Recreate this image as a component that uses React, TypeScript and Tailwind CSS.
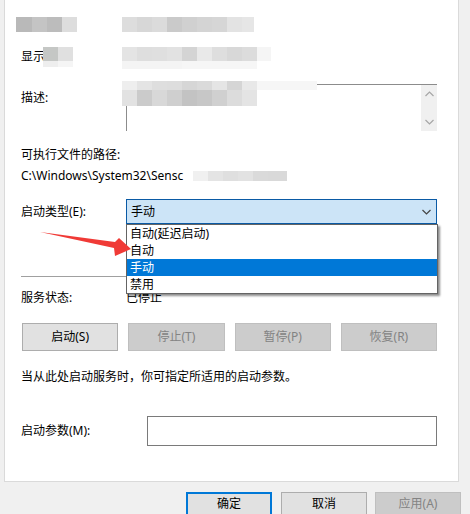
import React from "react";

const FONT = "font-['Noto_Sans','Noto_Sans_CJK_SC',sans-serif]";

// Pixelated censor strip: each cell is [width, colour]
function Mosaic({ rows, className }: { rows: { h: number; cells: [number, string][] }[]; className?: string }) {
  return (
    <div className={"flex flex-col " + (className ?? "")}>
      {rows.map((r, i) => (
        <div key={i} className="flex" style={{ height: r.h }}>
          {r.cells.map(([w, c], j) => (
            <div key={j} style={{ width: w, background: c }} />
          ))}
        </div>
      ))}
    </div>
  );
}

function Chevron({ up, className }: { up?: boolean; className?: string }) {
  return (
    <svg width="9" height="6" viewBox="0 0 9 6" className={className}>
      <path
        d={up ? "M0.5 5 L4.5 1 L8.5 5" : "M0.5 1 L4.5 5 L8.5 1"}
        fill="none"
        stroke="currentColor"
        strokeWidth="1.2"
      />
    </svg>
  );
}

function SvcButton({ label, enabled }: { label: string; enabled?: boolean }) {
  return (
    <div
      className={
        "h-[28px] flex items-center justify-center border text-[12px] " +
        (enabled
          ? "bg-[#e1e1e1] border-[#adadad] text-black"
          : "bg-[#cccccc] border-[#bfbfbf] text-[#838383]")
      }
    >
      {label}
    </div>
  );
}

export default function App() {
  return (
    <div className={"relative w-[470px] h-[514px] overflow-hidden bg-[#f0f0f0] text-black " + FONT}>
      {/* property page */}
      <div className="ml-[4px] w-[455px] h-[482px] bg-white border-l border-r border-b border-[#dadada] pl-[16px] pr-[21px] flex flex-col">
        {/* name row (censored) */}
        <div className="relative mt-[17px] h-[15px]">
          <Mosaic
            className="absolute left-[-5px] top-0"
            rows={[
              {
                h: 15,
                cells: [
                  [16, "#b9b9b9"],
                  [15, "#c4c4c4"],
                  [15, "#bcbcbc"],
                  [15, "#dddddd"],
                ],
              },
            ]}
          />
          <Mosaic
            className="absolute left-[101px] top-0"
            rows={[
              {
                h: 15,
                cells: [
                  [15, "#dddddd"],
                  [15, "#d7d7d7"],
                  [15, "#dbdbdb"],
                  [15, "#cacaca"],
                  [15, "#d0d0d0"],
                  [15, "#d4d4d4"],
                  [15, "#d6d6d6"],
                  [15, "#e3e3e3"],
                  [12, "#e6e6e6"],
                ],
              },
            ]}
          />
        </div>

        {/* display name row */}
        <div className="relative mt-[15px] h-[20px]">
          <span className="absolute left-0 top-[2px] text-[12px] leading-[16px]">显示</span>
          <Mosaic
            className="absolute left-[22px] top-0"
            rows={[
              { h: 14, cells: [[15, "#c5c7c5"], [15, "#e0e0e0"]] },
              { h: 6, cells: [[15, "#eeeeee"], [15, "#f5f5f5"]] },
            ]}
          />
          <Mosaic
            className="absolute left-[101px] top-0"
            rows={[
              {
                h: 14,
                cells: [
                  [15, "#e4e4e4"],
                  [15, "#dedede"],
                  [15, "#dfdfdf"],
                  [15, "#e2e2e2"],
                  [15, "#d4d4d4"],
                  [15, "#e9e9e9"],
                  [15, "#dedede"],
                  [15, "#d8d8d8"],
                  [15, "#dcdcdc"],
                  [14, "#f5f5f5"],
                ],
              },
              {
                h: 8,
                cells: [
                  [60, "#f4f4f4"],
                  [75, "#f6f6f6"],
                ],
              },
            ]}
          />
        </div>

        {/* description row */}
        <div className="relative mt-[17px] h-[47px]">
          <span className="absolute left-0 top-[6px] text-[12px] leading-[16px]">描述:</span>
          <div className="absolute left-[105px] right-0 top-0 bottom-0 border-t border-l border-[#8c8c8c] flex justify-end">
            <div className="w-[16px] h-full bg-[#f0f0f0] flex flex-col items-center justify-between py-[6px] text-[#a6a6a6]">
              <Chevron up />
              <Chevron />
            </div>
          </div>
          <Mosaic
            className="absolute left-[101px] top-[-3px]"
            rows={[
              {
                h: 9,
                cells: [
                  [15, "#eeeeee"],
                  [15, "#e4e4e4"],
                  [15, "#dedede"],
                  [15, "#dddddd"],
                  [15, "#d6d6d6"],
                  [15, "#dadada"],
                  [15, "#e5e5e5"],
                  [15, "#d5d5d5"],
                  [15, "#e8e8e8"],
                  [60, "#f6f6f6"],
                ],
              },
              {
                h: 16,
                cells: [
                  [15, "#e2e2e2"],
                  [15, "#cbcbcb"],
                  [15, "#d8d8d8"],
                  [15, "#cfcfcf"],
                  [15, "#c3c3c3"],
                  [15, "#c7c7c7"],
                  [15, "#d0d0d0"],
                  [15, "#dcdcdc"],
                  [15, "#e4e4e4"],
                ],
              },
            ]}
          />
        </div>

        {/* executable path */}
        <div className="mt-[16px] h-[16px] text-[12px] leading-[16px]">可执行文件的路径:</div>
        <div className="relative mt-[5px] h-[16px] text-[12px] leading-[16px]">
          <span>C:\Windows\System32\Sensc</span>
          <Mosaic
            className="absolute left-[172px] top-[3px]"
            rows={[
              {
                h: 10,
                cells: [
                  [15, "#f0f0f0"],
                  [15, "#e4e4e4"],
                  [15, "#dfdfdf"],
                  [15, "#e2e2e2"],
                  [15, "#dadada"],
                  [19, "#d9d9d9"],
                ],
              },
            ]}
          />
        </div>

        {/* startup type */}
        <div className="mt-[15px] h-[25px] flex items-center">
          <span className="w-[105px] text-[12px] leading-[16px]">启动类型(E):</span>
          <div className="flex-1 h-[25px] border border-[#0a5aa5] bg-[#cce4f7] flex items-center justify-between pl-[4px] pr-[5px]">
            <span className="text-[12px] leading-[16px]">手动</span>
            <Chevron className="text-[#444444]" />
          </div>
        </div>

        <div className="mt-[52px] h-px w-[110px] bg-[#a0a0a0]" />

        {/* service status */}
        <div className="mt-[13px] h-[16px] flex items-center text-[12px] leading-[16px]">
          <span className="w-[105px]">服务状态:</span>
          <span>已停止</span>
        </div>

        <div className="mt-[17px] ml-[1px] grid grid-cols-4 gap-[10px]">
          <SvcButton label="启动(S)" enabled />
          <SvcButton label="停止(T)" />
          <SvcButton label="暂停(P)" />
          <SvcButton label="恢复(R)" />
        </div>

        <div className="mt-[18px] h-[16px] text-[12px] leading-[16px]">当从此处启动服务时，你可指定所适用的启动参数。</div>

        <div className="mt-[31px] h-[30px] flex items-center">
          <span className="w-[126px] text-[12px] leading-[16px]">启动参数(M):</span>
          <div className="flex-1 h-[30px] border border-[#7a7a7a] bg-white" />
        </div>
      </div>

      {/* dialog buttons */}
      <div className="mt-[10px] flex pl-[186px]">
        <div className="w-[86px] h-[24px] border-2 border-[#0078d7] bg-[#e1e1e1] flex items-center justify-center text-[12px]">确定</div>
        <div className="ml-[9px] w-[86px] h-[24px] border border-[#adadad] bg-[#e1e1e1] flex items-center justify-center text-[12px]">取消</div>
        <div className="ml-[8px] w-[86px] h-[24px] border border-[#bfbfbf] bg-[#cccccc] flex items-center justify-center text-[12px] text-[#838383]">应用(A)</div>
      </div>

      {/* open combobox list */}
      <div className="absolute left-[126px] top-[224px] w-[312px] h-[70px] bg-white border border-[#646464] shadow-[2px_2px_2px_rgba(0,0,0,0.45)] flex flex-col text-[12px] leading-[17px]">
        <div className="h-[17px] pl-[3px]">自动(延迟启动)</div>
        <div className="h-[17px] pl-[3px]">自动</div>
        <div className="h-[17px] pl-[3px] bg-[#0078d7] text-white">手动</div>
        <div className="h-[17px] pl-[3px]">禁用</div>
      </div>

      {/* red pointer arrow */}
      <svg className="absolute left-0 top-0 pointer-events-none" width="470" height="514">
        <polygon
          points="40,232 115,242 119,238 131,249 115,256 114,248"
          fill="#f03a36"
        />
      </svg>
    </div>
  );
}
